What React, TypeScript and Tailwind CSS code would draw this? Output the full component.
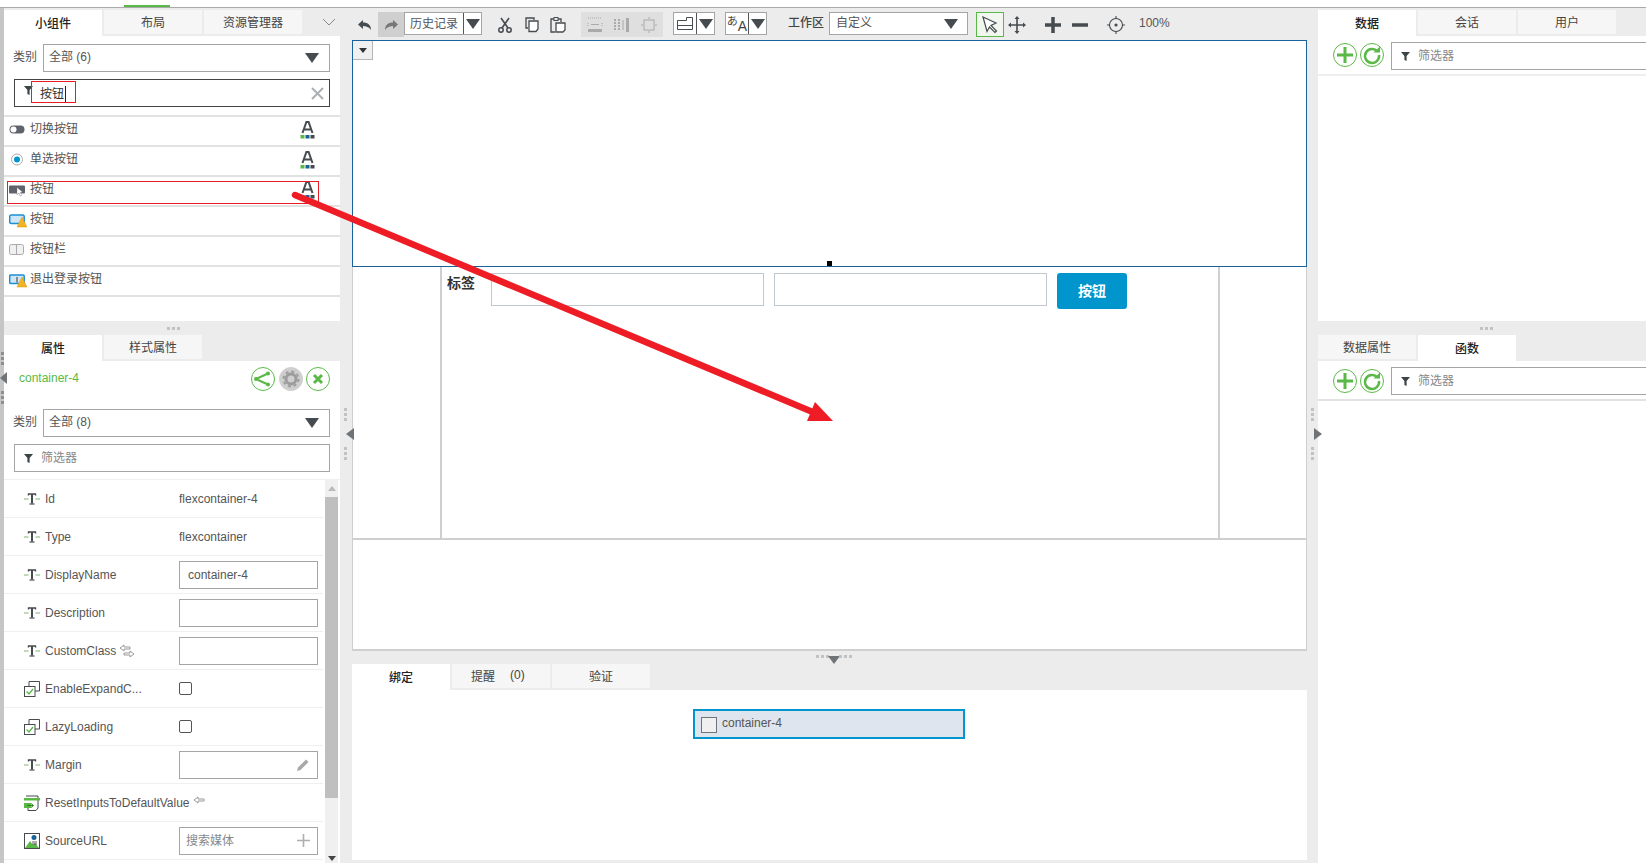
import type { ReactNode } from "react";

const dark = "#454b4f";
const green = "#5ab946";

function Tab({ label, active }: { label: string; active?: boolean }) {
  return (
    <div
      className={
        active
          ? "w-[98px] h-full mr-[2px] pt-[1px] bg-white flex items-center justify-center text-[#222] font-medium"
          : "w-[98px] h-[24px] mr-[2px] pt-[2px] bg-[#f6f6f6] flex items-center justify-center text-[#444]"
      }
    >
      {label}
    </div>
  );
}

function Tri({ className = "" }: { className?: string }) {
  return (
    <svg width="14" height="10" viewBox="0 0 14 10" className={className}>
      <path d="M0 0H14L7 10Z" fill={dark} />
    </svg>
  );
}

function Funnel({ className = "" }: { className?: string }) {
  return (
    <svg width="9" height="9" viewBox="0 0 9 9" className={className}>
      <path d="M0 0H9L5.6 4V9L3.4 8V4Z" fill="#3d4448" />
    </svg>
  );
}

function Select({ label, className = "" }: { label: string; className?: string }) {
  return (
    <div className={"flex items-center h-[28px] " + className}>
      <span className="w-[30px] ml-[9px] -mt-[3px] text-[#555] shrink-0">类别</span>
      <div className="flex-1 h-full border border-[#a5a5a5] flex items-center justify-between pl-[5px] pr-[10px] text-[#555]">
        <span className="-mt-[3px]">{label}</span>
        <Tri />
      </div>
    </div>
  );
}

function FontIcon() {
  return (
    <svg width="15" height="18" viewBox="0 0 15 18">
      <path d="M2.5 12 6.4 1H8.6L12.5 12M4.2 8.5H10.8" fill="none" stroke={dark} strokeWidth="2" />
      <rect x="0.5" y="14" width="4" height="3.5" fill={green} />
      <rect x="5.5" y="14" width="4" height="3.5" fill="#1a6299" />
      <rect x="10.5" y="14" width="4" height="3.5" fill={dark} />
    </svg>
  );
}

function Warn() {
  return <path d="M13 4.5 18 14.5H8Z" fill="#f4b324" stroke="#d99a10" strokeWidth="0.5" />;
}

function WidgetIcon({ kind }: { kind: string }) {
  return (
    <svg width="18" height="18" viewBox="0 -1.5 18 18" className="shrink-0">
      {kind === "toggle" && (
        <>
          <rect x="0.5" y="3" width="15" height="8" rx="4" fill="#5f646c" />
          <circle cx="4.5" cy="7" r="3" fill="#fff" />
        </>
      )}
      {kind === "radio" && (
        <>
          <circle cx="8" cy="7" r="5.5" fill="#fff" stroke="#aaa" />
          <circle cx="8" cy="7" r="3" fill="#0095cc" />
        </>
      )}
      {kind === "button" && (
        <>
          <rect x="0" y="3" width="16" height="8" rx="1" fill="#5f646c" />
          <path d="M8 5 13.5 9.5 11.5 10 12.5 13 11 13.5 10 10.5 8 12.5Z" fill="#fff" stroke="#777" strokeWidth="0.4" />
        </>
      )}
      {kind === "warn" && (
        <>
          <rect x="0.7" y="2.5" width="14.5" height="8.5" rx="1.5" fill="#cfe6f7" stroke="#1d8fd6" strokeWidth="1.5" />
          <Warn />
        </>
      )}
      {kind === "bar" && (
        <>
          <rect x="0.5" y="2" width="14" height="10" rx="2" fill="#f0f0f0" stroke="#aaa" />
          <path d="M7.5 2V12" stroke="#aaa" />
        </>
      )}
      {kind === "logout" && (
        <>
          <rect x="0.7" y="2.5" width="14.5" height="8.5" rx="1" fill="#cfe6f7" stroke="#1d8fd6" strokeWidth="1.5" />
          <path d="M8 4.5V10" stroke="#333" />
          <Warn />
        </>
      )}
    </svg>
  );
}

function WidgetItem({ kind, label, font }: { kind: string; label: string; font?: boolean }) {
  return (
    <div className="h-[30px] border-t-2 border-[#e2e2e2] flex pl-[5px] pr-[25px] relative">
      <span className="mt-[4px] mr-[3px]">
        <WidgetIcon kind={kind} />
      </span>
      <span className="text-[#555] mt-[4px] flex-1">{label}</span>
      {font && (
        <span className="mt-[4px]">
          <FontIcon />
        </span>
      )}
    </div>
  );
}

function TextIcon() {
  return (
    <svg width="16" height="12" viewBox="0 0 16 12" className="shrink-0">
      <path d="M0 6H4.5M11.5 6H16" stroke="#7fb56f" strokeWidth="1" />
      <path d="M4.5 2.5V1H11.5V2.5" fill="none" stroke="#454b4f" strokeWidth="1.4" />
      <path d="M8 1V10.5" stroke="#454b4f" strokeWidth="2" />
      <path d="M5.5 11H10.5" stroke="#454b4f" strokeWidth="1.2" />
    </svg>
  );
}

function CheckIcon() {
  return (
    <svg width="16" height="16" viewBox="0 0 16 16" className="shrink-0">
      <path d="M5 5V0.5H15.5V10H11" fill="none" stroke="#454b4f" />
      <rect x="0.5" y="5.5" width="10.5" height="10" fill="#fff" stroke="#454b4f" />
      <path d="M2.5 10.5 5 13 9 8" fill="none" stroke={green} strokeWidth="1.3" />
    </svg>
  );
}

function ResetIcon() {
  return (
    <svg width="16" height="16" viewBox="0 0 16 16" className="shrink-0">
      <path d="M2 1H14V13L12 15.5H4V13" fill="#fff" stroke="#454b4f" />
      <rect x="0" y="3" width="16" height="2.5" fill={green} />
      <rect x="0" y="8" width="7" height="5" fill={green} />
      <path d="M3 10.5H9M7 8.5 9.5 10.5 7 12.5" fill="none" stroke="#2f7f22" />
    </svg>
  );
}

function ImageIcon() {
  return (
    <svg width="16" height="16" viewBox="0 0 16 16" className="shrink-0">
      <rect x="0.5" y="0.5" width="15" height="15" fill="#fff" stroke="#454b4f" />
      <circle cx="10" cy="4.5" r="2.5" fill="#1a6299" />
      <path d="M1 15 6 8 9 12 11 10 15 15Z" fill={green} />
      <path d="M8 9H13M8 11H13" stroke="#333" strokeWidth="0.8" />
    </svg>
  );
}

function PropRow({ icon, label, children }: { icon: ReactNode; label: ReactNode; children?: ReactNode }) {
  return (
    <div className="h-[38px] border-b-[1.5px] border-[#efefef] flex items-center pl-[20px]">
      <span className="w-[21px] flex">{icon}</span>
      <div className="w-[134px] flex items-center text-[#555] whitespace-nowrap">{label}</div>
      {children}
    </div>
  );
}

function PropInput({ text, muted, right }: { text?: string; muted?: boolean; right?: ReactNode }) {
  return (
    <div
      className={
        "w-[139px] h-[28px] border border-[#a5a5a5] flex items-center justify-between pr-[7px] " +
        (muted ? "pl-[6px] text-[#888]" : "pl-[8px] text-[#555]")
      }
    >
      <span>{text}</span>
      {right}
    </div>
  );
}

function Swap({ both }: { both?: boolean }) {
  return (
    <svg width="16" height="14" viewBox="0 0 16 14" className="ml-[3px] shrink-0">
      <path d="M5 1 1 4 5 7V5H11V3H5Z" fill="#fff" stroke="#999" />
      {both && <path d="M11 7 15 10 11 13V11H5V9H11Z" fill="#fff" stroke="#999" />}
    </svg>
  );
}

function CircleBtn({ children, fill }: { children: ReactNode; fill?: boolean }) {
  return (
    <svg width="24" height="24" viewBox="0 0 24 24">
      <circle cx="12" cy="12" r="11.5" fill={fill ? "#cfcfcf" : "#fff"} stroke={fill ? "#cfcfcf" : green} />
      {children}
    </svg>
  );
}

function Plus() {
  return (
    <CircleBtn>
      <path d="M12 4V20M4 12H20" stroke={green} strokeWidth="3" />
    </CircleBtn>
  );
}

function Refresh() {
  return (
    <CircleBtn>
      <path d="M17.5 8.5A7 7 0 1 0 19 12" fill="none" stroke={green} strokeWidth="2.5" />
      <path d="M13.5 9.5H20V3.5Z" fill={green} />
    </CircleBtn>
  );
}

function FilterBox({ className = "" }: { className?: string }) {
  return (
    <div className={"h-[28px] border border-[#a5a5a5] flex items-center pl-[9px] text-[#888] " + className}>
      <Funnel className="mr-[8px]" />
      筛选器
    </div>
  );
}

function Dots({ vertical, dark: isDark, className = "" }: { vertical?: boolean; dark?: boolean; className?: string }) {
  const dot = isDark ? "w-[3px] h-[3px] bg-[#8f8f8f]" : "w-[3px] h-[3px] bg-[#c2c2c2]";
  return (
    <div className={"flex gap-[2px] " + (vertical ? "flex-col " : "") + className}>
      <span className={dot} />
      <span className={dot} />
      <span className={dot} />
    </div>
  );
}

function Splitter({ left }: { left?: boolean }) {
  return (
    <div className={"shrink-0 flex flex-col gap-[7px] pt-[400px] items-start " + (left ? "w-[12px]" : "w-[11px]")}>
      <Dots vertical className="ml-[4px]" />
      {left ? (
        <svg width="8" height="12" viewBox="0 0 8 12" className="ml-[6px] relative z-10">
          <path d="M8 0V12L0 6Z" fill="#6f7478" />
        </svg>
      ) : (
        <svg width="8" height="12" viewBox="0 0 8 12" className="ml-[7px] relative z-10">
          <path d="M0 0V12L8 6Z" fill="#6f7478" />
        </svg>
      )}
      <Dots vertical className="ml-[4px]" />
    </div>
  );
}

function ToolIcon({ children, className = "" }: { children: ReactNode; className?: string }) {
  return (
    <div className={"w-[26px] h-[25px] flex items-center justify-center shrink-0 " + className}>
      <svg width="18" height="18" viewBox="0 0 18 18">
        {children}
      </svg>
    </div>
  );
}

function SplitSelect({ children, text }: { children?: ReactNode; text?: string }) {
  return (
    <div className="h-[23px] border border-[#a5a5a5] bg-white flex items-center shrink-0">
      <div className={"h-full flex items-center border-r border-[#555] " + (text ? "w-[59px] pl-[5px] text-[#555]" : "w-[23px] justify-center")}>
        {text}
        {children}
      </div>
      <div className="w-[17px] flex justify-center">
        <Tri />
      </div>
    </div>
  );
}

function Toolbar() {
  return (
    <div className="h-[32px] flex items-start pt-[4px] text-[#444]">
      <ToolIcon>
        <path d="M7 4 2 8.5 7 13V10C10 10 13 11 15 14 15 9 12 6.5 7 6.5Z" fill={dark} />
      </ToolIcon>
      <ToolIcon className="bg-[#cfcfcf]">
        <path d="M11 4 16 8.5 11 13V10C8 10 5 11 3 14 3 9 6 6.5 11 6.5Z" fill="#777" />
      </ToolIcon>
      <SplitSelect text="历史记录" />
      <div className="w-[10px]" />
      <ToolIcon>
        <circle cx="5" cy="14" r="2.2" fill="none" stroke={dark} strokeWidth="1.5" />
        <circle cx="13" cy="14" r="2.2" fill="none" stroke={dark} strokeWidth="1.5" />
        <path d="M6 12 13 2M12 12 5 2" stroke={dark} strokeWidth="1.6" />
      </ToolIcon>
      <ToolIcon className="ml-[1px]">
        <path d="M11 4V2H3V12H5" fill="none" stroke={dark} strokeWidth="1.3" />
        <path d="M6 5H15V13L13 15.5H6Z" fill="#fff" stroke={dark} strokeWidth="1.3" />
      </ToolIcon>
      <ToolIcon>
        <path d="M5 3H2V16H6M9 3H12V6" fill="none" stroke={dark} strokeWidth="1.3" />
        <rect x="5" y="1.5" width="4" height="3" fill="none" stroke={dark} />
        <path d="M7 7H16V14L14 16H7Z" fill="#fff" stroke={dark} strokeWidth="1.3" />
      </ToolIcon>
      <div className="w-[10px]" />
      <div className="flex bg-[#dfdfdf] h-[25px] pl-[1px] pr-[1px] w-[82px] gap-[1px]">
        <ToolIcon>
          <path d="M2 2H16M2 7V10M16 7V10" stroke="#aaa" strokeDasharray="1 1" />
          <path d="M5 8.5H13" stroke="#aaa" />
          <rect x="2" y="13" width="14" height="3" fill="#aaa" />
        </ToolIcon>
        <ToolIcon>
          <path d="M2 3V15M6 3V15" stroke="#aaa" strokeWidth="2" strokeDasharray="2 1" />
          <path d="M10 4V14" stroke="#aaa" />
          <rect x="13" y="2" width="3" height="14" fill="#aaa" />
        </ToolIcon>
        <ToolIcon>
          <rect x="4" y="4" width="10" height="10" fill="none" stroke="#aaa" />
          <path d="M9 1V3M9 15V17M1 9H3M15 9H17" stroke="#aaa" />
        </ToolIcon>
      </div>
      <div className="w-[10px]" />
      <SplitSelect>
        <svg width="16" height="13" viewBox="0 0 16 13">
          <path d="M0.5 3.5H9.5V0.5H15.5V12.5H0.5ZM0.5 8.5H15.5" fill="none" stroke={dark} />
        </svg>
      </SplitSelect>
      <div className="w-[10px]" />
      <SplitSelect>
        <span className="text-[11px] leading-none text-[#444] -mt-[5px]">あ</span>
        <span className="text-[14px] leading-none text-[#444] mt-[4px]">A</span>
      </SplitSelect>
      <span className="ml-[21px] w-[41px] mt-[3px] font-medium text-[#444]">工作区</span>
      <div className="w-[139px] h-[23px] border border-[#a5a5a5] bg-white flex items-center justify-between pl-[6px] pr-[9px] text-[#555] shrink-0">
        <span className="-mt-[1px]">自定义</span>
        <Tri />
      </div>
      <div className="ml-[8px] w-[28px] h-[25px] border border-[#5ab946] bg-[#f1f7ee] flex items-center justify-center shrink-0">
        <svg width="18" height="18" viewBox="0 0 18 18">
          <path d="M2 1 15 7 10 9.5 15.5 15 14 16.5 8.5 11 6 15.5Z" fill="#fff" stroke={dark} strokeWidth="1.2" />
        </svg>
      </div>
      <ToolIcon>
        <path d="M9 2V16M2 9H16" stroke={dark} strokeWidth="1.6" />
        <path d="M9 0 11.5 3H6.5ZM9 18 11.5 15H6.5ZM0 9 3 6.5V11.5ZM18 9 15 6.5V11.5Z" fill={dark} />
      </ToolIcon>
      <ToolIcon className="ml-[10px]">
        <path d="M9 1V17M1 9H17" stroke={dark} strokeWidth="3.5" />
      </ToolIcon>
      <ToolIcon className="ml-[1px]">
        <path d="M1 9H17" stroke={dark} strokeWidth="3.5" />
      </ToolIcon>
      <ToolIcon className="ml-[10px]">
        <circle cx="9" cy="9" r="6.5" fill="none" stroke={dark} strokeWidth="1.1" />
        <circle cx="9" cy="9" r="1.6" fill={dark} />
        <path d="M9 0V3M9 15V18M0 9H3M15 9H18" stroke={dark} strokeWidth="1.1" />
      </ToolIcon>
      <span className="ml-[10px] mt-[3px] text-[#555]">100%</span>
    </div>
  );
}

export default function App() {
  return (
    <div className="relative w-[1646px] h-[863px] overflow-hidden bg-[#ececec] text-[12px] leading-[16px] font-['Liberation_Sans','Noto_Sans_CJK_SC',sans-serif]">
      <div className="h-[8px] bg-white border-b border-[#aaa] pt-[5px] pl-[124px]">
        <div className="w-[46px] h-[2px] bg-[#5ab946]" />
      </div>
      <div className="flex h-[855px]">
        <div className="w-[4px] shrink-0 bg-[#c6c6c6] relative">
          <div className="absolute z-10 left-0 top-[344px] flex flex-col gap-[7px]">
            <Dots vertical dark className="ml-[1px]" />
            <svg width="7" height="12" viewBox="0 0 7 12">
              <path d="M7 0V12L0 6Z" fill="#6f7478" />
            </svg>
            <Dots vertical dark className="ml-[1px]" />
          </div>
        </div>

        <aside className="w-[336px] shrink-0 flex flex-col">
          <div className="h-[313px] bg-white flex flex-col">
            <div className="h-[28px] bg-[#ececec] pt-[2px] flex">
              <Tab label="小组件" active />
              <Tab label="布局" />
              <Tab label="资源管理器" />
              <svg width="14" height="8" viewBox="0 0 14 8" className="ml-[18px] mt-[8px]">
                <path d="M1 1 7 7 13 1" fill="none" stroke="#888" />
              </svg>
            </div>
            <Select label="全部 (6)" className="mt-[8px] pr-[10px]" />
            <div className="mt-[7px] ml-[10px] mr-[10px] h-[28px] border border-[#444] flex items-center justify-between pl-[9px] pr-[5px]">
              <div className="flex items-center">
                <Funnel className="-mt-[6px] mr-[7px]" />
                <span className="border-r border-[#222] text-[#333] pr-[1px] h-[16px] mt-[2px]">按钮</span>
              </div>
              <svg width="13" height="13" viewBox="0 0 13 13">
                <path d="M1 1 12 12M12 1 1 12" stroke="#aab0b5" strokeWidth="2" />
              </svg>
            </div>
            <div className="mt-[8px] border-b-2 border-[#e2e2e2]">
              <WidgetItem kind="toggle" label="切换按钮" font />
              <WidgetItem kind="radio" label="单选按钮" font />
              <WidgetItem kind="button" label="按钮" font />
              <WidgetItem kind="warn" label="按钮" />
              <WidgetItem kind="bar" label="按钮栏" />
              <WidgetItem kind="logout" label="退出登录按钮" />
            </div>
          </div>
          <div className="h-[14px] flex items-center justify-center pl-[2px]">
            <Dots />
          </div>
          <div className="flex-1 flex flex-col min-h-0">
            <div className="h-[26px] flex">
              <Tab label="属性" active />
              <Tab label="样式属性" />
            </div>
            <div className="flex-1 bg-white flex flex-col min-h-0">
              <div className="h-[37px] flex items-start justify-between pl-[15px] pr-[10px] pt-[6px]">
                <span className="text-[#5ab946] mt-[3px]">container-4</span>
                <div className="flex gap-[3.5px]">
                  <CircleBtn>
                    <path d="M5 12 18 6M5 12 18 18" stroke={green} strokeWidth="2" />
                    <circle cx="5" cy="12" r="2" fill={green} />
                    <circle cx="17" cy="6.5" r="2" fill={green} />
                    <circle cx="17" cy="17.5" r="2" fill={green} />
                  </CircleBtn>
                  <CircleBtn fill>
                    <circle cx="12" cy="12" r="5" fill="none" stroke="#9c9c9c" strokeWidth="3" />
                    <circle cx="12" cy="12" r="7.5" fill="none" stroke="#9c9c9c" strokeWidth="2" strokeDasharray="3 2.9" />
                  </CircleBtn>
                  <CircleBtn>
                    <path d="M8 8 16 16M16 8 8 16" stroke={green} strokeWidth="3" />
                  </CircleBtn>
                </div>
              </div>
              <Select label="全部 (8)" className="mt-[11px] pr-[10px]" />
              <FilterBox className="mt-[7px] mx-[10px]" />
              <div className="mt-[7px] flex-1 border-t border-[#efefef] flex min-h-0">
                <div className="w-[319px] shrink-0">
                  <PropRow icon={<TextIcon />} label="Id">
                    <span className="text-[#555]">flexcontainer-4</span>
                  </PropRow>
                  <PropRow icon={<TextIcon />} label="Type">
                    <span className="text-[#555]">flexcontainer</span>
                  </PropRow>
                  <PropRow icon={<TextIcon />} label="DisplayName">
                    <PropInput text="container-4" />
                  </PropRow>
                  <PropRow icon={<TextIcon />} label="Description">
                    <PropInput />
                  </PropRow>
                  <PropRow
                    icon={<TextIcon />}
                    label={
                      <>
                        CustomClass
                        <Swap both />
                      </>
                    }
                  >
                    <PropInput />
                  </PropRow>
                  <PropRow icon={<CheckIcon />} label="EnableExpandC...">
                    <div className="w-[13px] h-[13px] border border-[#555] rounded-[2px]" />
                  </PropRow>
                  <PropRow icon={<CheckIcon />} label="LazyLoading">
                    <div className="w-[13px] h-[13px] border border-[#555] rounded-[2px]" />
                  </PropRow>
                  <PropRow icon={<TextIcon />} label="Margin">
                    <PropInput
                      right={
                        <svg width="14" height="14" viewBox="0 0 14 14">
                          <path d="M1 13 2 9.5 10 1.5 12.5 4 4.5 12Z" fill="#a8a8a8" />
                        </svg>
                      }
                    />
                  </PropRow>
                  <PropRow
                    icon={<ResetIcon />}
                    label={
                      <>
                        ResetInputsToDefaultValue
                        <Swap />
                      </>
                    }
                  />
                  <PropRow icon={<ImageIcon />} label="SourceURL">
                    <PropInput
                      text="搜索媒体"
                      muted
                      right={
                        <svg width="13" height="13" viewBox="0 0 13 13">
                          <path d="M6.5 0V13M0 6.5H13" stroke="#aab0b5" strokeWidth="1.6" />
                        </svg>
                      }
                    />
                  </PropRow>
                </div>
                <div className="ml-[2px] w-[13px] shrink-0 bg-[#f0f0f0] flex flex-col items-center">
                  <svg width="8" height="5" viewBox="0 0 8 5" className="my-[6px]">
                    <path d="M0 5H8L4 0Z" fill="#bbb" />
                  </svg>
                  <div className="w-full h-[301px] bg-[#bfbfbf]" />
                  <svg width="8" height="5" viewBox="0 0 8 5" className="mt-[58px]">
                    <path d="M0 0H8L4 5Z" fill="#444" />
                  </svg>
                </div>
              </div>
            </div>
          </div>
        </aside>

        <Splitter left />

        <main className="w-[955px] shrink-0 flex flex-col">
          <Toolbar />
          <div className="h-[227px] bg-white border border-[#1a6299] relative">
            <div className="w-[20px] h-[19px] bg-[#f0f0f0] border-r border-b border-[#b5b5b5] flex items-center justify-center">
              <svg width="8" height="5" viewBox="0 0 8 5">
                <path d="M0 0H8L4 5Z" fill="#333" />
              </svg>
            </div>
            <div className="absolute left-[474px] bottom-0 w-[5px] h-[5px] bg-black" />
          </div>
          <div className="h-[384px] bg-white border-x border-b-2 border-[#cfcfcf] flex flex-col">
            <div className="h-[273px] shrink-0 border-b-2 border-[#cfcfcf] flex">
              <div className="w-[89px] border-r-2 border-[#cfcfcf]" />
              <div className="w-[778px] border-r-2 border-[#cfcfcf] flex items-start pt-[6px] pl-[5px]">
                <span className="w-[44px] mt-[1px] text-[14px] leading-[18px] font-bold text-[#333]">标签</span>
                <div className="w-[273px] h-[33px] border border-[#c2c8cf]" />
                <div className="ml-[10px] w-[273px] h-[33px] border border-[#c2c8cf]" />
                <div className="ml-[10px] w-[70px] h-[36px] rounded-[3px] bg-[#0095cc] text-white font-bold text-[14px] flex items-center justify-center">
                  按钮
                </div>
              </div>
            </div>
          </div>
          <div className="h-[13px] flex items-start justify-center gap-[2px] pt-[4px] pl-[8px]">
            <Dots />
            <svg width="12" height="8" viewBox="0 0 12 8" className="-mx-[3px] mt-[1px]">
              <path d="M0 0H12L6 8Z" fill="#6f7478" />
            </svg>
            <Dots />
          </div>
          <div className="h-[26px] flex items-start">
            <Tab label="绑定" active />
            <div className="w-[98px] h-[24px] mr-[2px] pt-[2px] pl-[19px] bg-[#f6f6f6] flex items-center text-[#444]">
              提醒
              <span className="ml-[15px] -mt-[4px]">(0)</span>
            </div>
            <Tab label="验证" />
          </div>
          <div className="h-[170px] bg-white pt-[19px] pl-[341px]">
            <div className="w-[272px] h-[30px] border-2 border-[#0095cc] bg-[#dee5ee] flex items-start pl-[6px] pt-[6px] text-[#555]">
              <div className="w-[16px] h-[16px] border border-[#6f7478] bg-[#f0f0f0] mr-[5px]" />
              <span className="-mt-[2px]">container-4</span>
            </div>
          </div>
        </main>

        <Splitter />

        <aside className="flex-1 flex flex-col overflow-hidden">
          <div className="h-[313px] bg-white flex flex-col">
            <div className="h-[28px] bg-[#ececec] pt-[2px] flex">
              <Tab label="数据" active />
              <Tab label="会话" />
              <Tab label="用户" />
            </div>
            <div className="h-[40px] border-b-2 border-[#efefef] flex items-start pt-[7px] pl-[15px]">
              <div className="flex gap-[3px] pt-0">
                <Plus />
                <Refresh />
              </div>
              <FilterBox className="-mt-[1px] ml-[7px] flex-1 border-r-0" />
            </div>
          </div>
          <div className="h-[14px] flex items-center justify-center pl-[8px]">
            <Dots />
          </div>
          <div className="flex-1 flex flex-col">
            <div className="h-[26px] flex">
              <Tab label="数据属性" />
              <Tab label="函数" active />
            </div>
            <div className="flex-1 bg-white">
              <div className="h-[40px] border-b-2 border-[#e2e2e2] flex items-start pt-[8px] pl-[15px]">
                <div className="flex gap-[3px]">
                  <Plus />
                  <Refresh />
                </div>
                <FilterBox className="-mt-[2px] ml-[7px] flex-1 border-r-0" />
              </div>
            </div>
          </div>
        </aside>
      </div>

      {/* red annotations on top of the screenshot */}
      <div className="absolute left-[31px] top-[81px] w-[45px] h-[22px] border border-[#e81c24]" />
      <div className="absolute left-[7px] top-[181px] w-[312px] h-[23px] border border-[#e81c24]" />
      <svg width="1646" height="863" viewBox="0 0 1646 863" className="absolute inset-0 pointer-events-none">
        <path d="M295 195 815 413" stroke="#ee1c25" strokeWidth="6.5" strokeLinecap="round" />
        <path d="M833 421 815 402 807 421Z" fill="#ee1c25" />
      </svg>
    </div>
  );
}
